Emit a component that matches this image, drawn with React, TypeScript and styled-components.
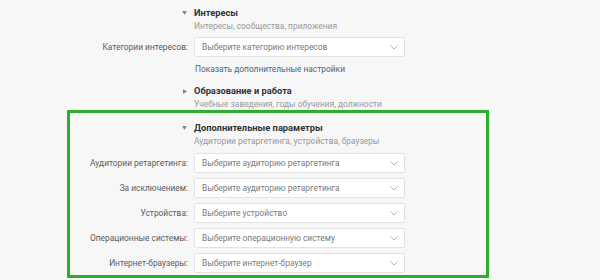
import React from "react";
import styled, { createGlobalStyle } from "styled-components";

const Global = createGlobalStyle`
  html, body { margin: 0; padding: 0; background: #f7f7f7; }
  body { font-family: Roboto, "Open Sans", Arial, sans-serif; }
`;

const Page = styled.div`
  --label-w: 188px;
  width: 600px;
  height: 280px;
  box-sizing: border-box;
  padding-top: 6px;
  background: #f7f7f7;
  overflow: hidden;
`;

const Header = styled.div<{ $mt?: number }>`
  display: grid;
  grid-template-columns: var(--label-w) 1fr;
  column-gap: 6px;
  margin-top: ${(p) => p.$mt ?? 0}px;
`;

const Arrow = styled.div`
  display: flex;
  justify-content: flex-end;
  padding-right: 1px;
  padding-top: 5px;
  height: 14px;
  box-sizing: border-box;
`;

const HeaderText = styled.div`
  display: flex;
  flex-direction: column;
`;

const Title = styled.div`
  font-size: 9.3px;
  font-weight: 700;
  line-height: 14px;
  color: #333;
`;

const Subtitle = styled.div`
  font-size: 8.4px;
  line-height: 12px;
  color: #999;
`;

const Row = styled.div<{ $mt: number }>`
  display: grid;
  grid-template-columns: var(--label-w) 211px;
  column-gap: 6px;
  align-items: center;
  margin-top: ${(p) => p.$mt}px;
`;

const Label = styled.div`
  text-align: right;
  font-size: 8.4px;
  color: #5c5c5c;
  white-space: nowrap;
`;

const Select = styled.div`
  height: 20px;
  box-sizing: border-box;
  background: #fff;
  border: 1px solid #e3e3e3;
  border-radius: 2px;
  display: flex;
  align-items: center;
  justify-content: space-between;
  padding: 0 6px 0 7px;
  font-size: 8.4px;
  color: #7a7a7a;
  white-space: nowrap;
`;

const LinkRow = styled.div`
  margin-top: 5px;
  padding-left: calc(var(--label-w) + 7px);
  font-size: 8.4px;
  line-height: 14px;
  color: #4d6580;
`;

const Box = styled.div`
  --label-w: 118px;
  margin-left: 67px;
  width: 422px;
  height: 168px;
  box-sizing: border-box;
  border: 3px solid #2cae2a;
  padding-top: 8px;
`;

const Tri = ({ dir }: { dir: "down" | "right" }) =>
  dir === "down" ? (
    <svg width="5" height="4" viewBox="0 0 5 4">
      <path d="M0 0 H5 L2.5 4 Z" fill="#8a8a8a" />
    </svg>
  ) : (
    <svg width="4" height="5" viewBox="0 0 4 5">
      <path d="M0 0 V5 L4 2.5 Z" fill="#8a8a8a" />
    </svg>
  );

const Chevron = () => (
  <svg width="8" height="5" viewBox="0 0 8 5">
    <path d="M0.5 0.5 L4 4 L7.5 0.5" fill="none" stroke="#b5b5b5" strokeWidth="1" />
  </svg>
);

const Field = ({ label, value, mt }: { label: string; value: string; mt: number }) => (
  <Row $mt={mt}>
    <Label>{label}</Label>
    <Select>
      <span>{value}</span>
      <Chevron />
    </Select>
  </Row>
);

const Section = ({
  title,
  sub,
  dir,
  mt,
}: {
  title: string;
  sub: string;
  dir: "down" | "right";
  mt?: number;
}) => (
  <Header $mt={mt}>
    <Arrow>
      <Tri dir={dir} />
    </Arrow>
    <HeaderText>
      <Title>{title}</Title>
      <Subtitle>{sub}</Subtitle>
    </HeaderText>
  </Header>
);

export default function App() {
  return (
    <Page>
      <Global />
      <Section title="Интересы" sub="Интересы, сообщества, приложения" dir="down" />
      <Field label="Категории интересов:" value="Выберите категорию интересов" mt={5} />
      <LinkRow>Показать дополнительные настройки</LinkRow>
      <Section title="Образование и работа" sub="Учебные заведения, годы обучения, должности" dir="right" mt={8} />
      <Box>
        <Section title="Дополнительные параметры" sub="Аудитории ретаргетинга, устройства, браузеры" dir="down" />
        <Field label="Аудитории ретаргетинга:" value="Выберите аудиторию ретаргетинга" mt={6} />
        <Field label="За исключением:" value="Выберите аудиторию ретаргетинга" mt={5} />
        <Field label="Устройства:" value="Выберите устройство" mt={5} />
        <Field label="Операционные системы:" value="Выберите операционную систему" mt={5} />
        <Field label="Интернет-браузеры:" value="Выберите интернет-браузер" mt={5} />
      </Box>
    </Page>
  );
}
